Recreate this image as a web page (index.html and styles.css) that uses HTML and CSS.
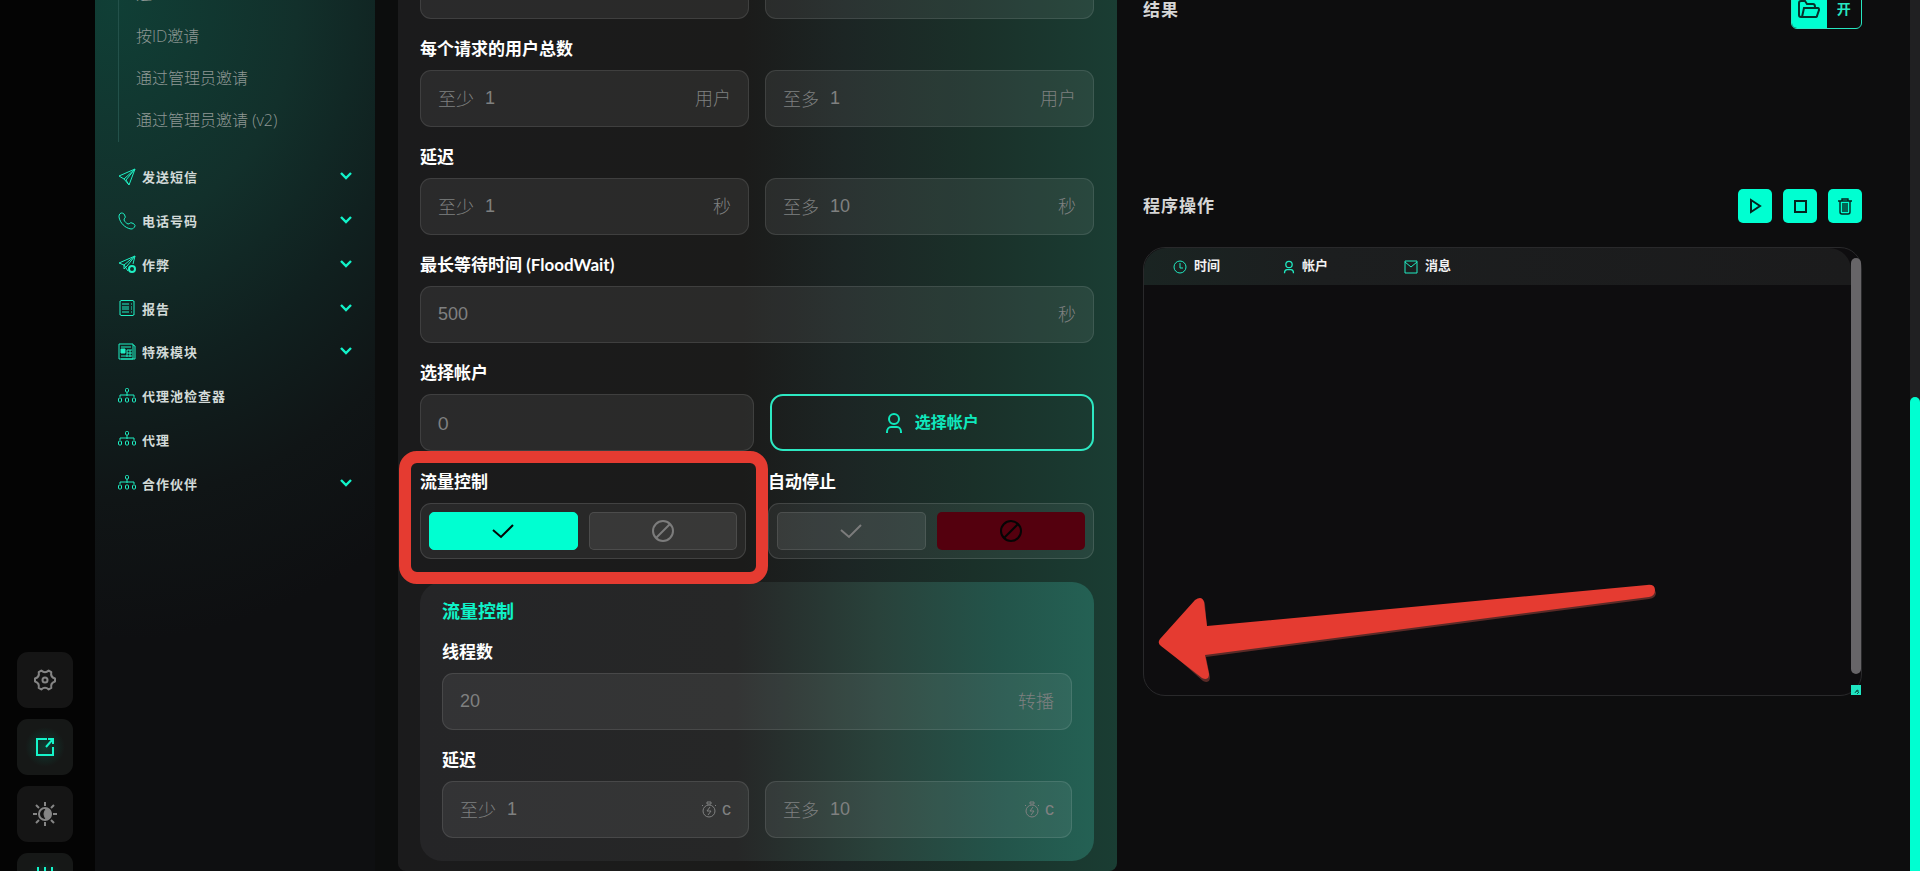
FILE: index.html
```html
<!DOCTYPE html>
<html lang="zh-CN">
<head>
  <meta charset="UTF-8" />
  <meta name="viewport" content="width=device-width, initial-scale=1.0"/>
  <title>按ID邀请</title>
  <link rel="stylesheet" href="styles.css">
</head>
<body>
  <svg class="sprite" aria-hidden="true">
    <symbol id="i-send" viewBox="0 0 18 18"><path d="M17 1 1 8l5 3 5 6 6-16ZM17 1 6 11M17 1l-9 11 3 5"/></symbol>
    <symbol id="i-phone" viewBox="0 0 18 18"><path d="M3 1C1 2 1 4 1 5c1 6 6 11 12 12 2 0 3-1 4-3 0-1 0-1-1-2l-2-1c-2-1-2 1-4 1-2-1-3-2-4-4 0-2 2-2 1-4L6 2C5 1 4 1 3 1Z"/></symbol>
    <symbol id="i-boost" viewBox="0 0 18 18"><path d="M10 16 6 10 1 8l16-7-2 8M17 1 6 10v4l3-3 8-10"/><circle cx="14" cy="14" r="3" stroke-width="2"/></symbol>
    <symbol id="i-report" viewBox="0 0 18 18"><path d="M2 2h1l1-1 1 1 1-1 1 1 1-1 1 1 1-1 1 1 1-1 1 1 1-1 1 1h1v14h-1l-1 1-1-1-1 1-1-1-1 1-1-1-1 1-1-1-1 1-1-1-1 1-1-1H2ZM4 5h7M4 8h7M4 10h7M4 13h7M13 5h1M13 8h1M13 10h1M13 13h1"/></symbol>
    <symbol id="i-module" viewBox="0 0 18 18"><path d="M1 1h14v15H1ZM15 2l2 1v13H3M3 4h10M9 7h5M9 10h5M3 13h11M9 7v7M12 7v7"/><path d="M3 6h4v4H3Z" fill="currentColor"/></symbol>
    <symbol id="i-proxy" viewBox="0 0 18 18"><path d="M9 5v4M2 10V8h14v2"/><rect x="7.5" y="1.5" width="3" height="3.5" rx="1"/><rect x=".5" y="11" width="3" height="4" rx="1"/><rect x="7.5" y="11" width="3" height="4" rx="1"/><rect x="14.5" y="11" width="3" height="4" rx="1"/></symbol>
    <symbol id="i-chevron" viewBox="0 0 12 9"><path d="m1 1 5 5 5-5" stroke-width="2.4"/></symbol>
    <symbol id="i-gear" viewBox="0 0 24 24"><path d="M22 10.5v3Q17.2 15 18.3 19.9L15.7 21.4Q12 18 8.3 21.4L5.7 19.9Q6.8 15 2 13.5v-3Q6.8 9 5.7 4.1L8.3 2.6Q12 6 15.7 2.6l2.6 1.5Q17.2 9 22 10.5Z" stroke-width="2" stroke-linejoin="round"/><circle cx="12" cy="12" r="2.5" stroke-width="2"/></symbol>
    <symbol id="i-open" viewBox="0 0 20 20"><path d="M12 2H2v16h16v-8M11 10l7-8M13 2h5v5" stroke-width="2"/></symbol>
    <symbol id="i-sun" viewBox="0 0 26 26"><path d="M13 1v4M13 21v4M1 13h4M21 13h4M4 4l3 3M19 19l3 3M22 4l-3 3M7 19l-3 3" stroke-width="2"/><circle cx="13" cy="13" r="6" stroke-width="2"/><path d="M14 8q-4 5 0 10 5 0 5-5t-5-5Z" fill="currentColor"/></symbol>
    <symbol id="i-bars" viewBox="0 0 20 28"><path d="M3 0v28M10 0v28M17 0v28" stroke-width="2"/></symbol>
    <symbol id="i-user" viewBox="0 0 18 22"><circle cx="9" cy="7" r="5"/><path d="M2 21v-1c0-3 2-5 4-5h6c2 0 4 2 4 5v1"/></symbol>
    <symbol id="i-check" viewBox="0 0 26 20"><path d="m3 9 8 7L23 4"/></symbol>
    <symbol id="i-ban" viewBox="0 0 24 24"><circle cx="12" cy="12" r="10"/><path d="M5 19 19 5"/></symbol>
    <symbol id="i-timer" viewBox="0 0 16 18"><circle cx="8" cy="10" r="6"/><path d="M6 1h4v2H6ZM2 4 1 5M14 4l1 1M9 6l-3 4h4l-3 4"/></symbol>
    <symbol id="i-folder" viewBox="0 0 22 18"><path d="M4 17H3q-2 0-2-2V3q0-2 2-2h4l2 3h6q2 0 2 3M4 17l2-9h14q1 0 1 2l-2 6q0 1-2 1Z"/></symbol>
    <symbol id="i-play" viewBox="0 0 16 16"><path d="M4 2v12l9-6Z"/></symbol>
    <symbol id="i-stop" viewBox="0 0 16 16"><path d="M3 3h11v11H3Z"/></symbol>
    <symbol id="i-trash" viewBox="0 0 16 18"><path d="M1 4h14M5 4V2h6v2M3 4v11q0 2 2 2h6q2 0 2-2V4M6 6v9M8 6v9M10 6v9" stroke-width="1.4"/></symbol>
    <symbol id="i-clock" viewBox="0 0 14 14"><circle cx="7" cy="7" r="6"/><path d="M7 3v5h3"/></symbol>
    <symbol id="i-mail" viewBox="0 0 14 14"><path d="M1 1h12v12H1ZM1 2l6 5 6-5"/></symbol>
  </svg>

  <div class="app">
    <nav class="rail" aria-label="工具">
      <button aria-label="设置"><svg width="24" height="24"><use href="#i-gear"/></svg></button>
      <button class="on" aria-label="打开"><svg width="20" height="20"><use href="#i-open"/></svg></button>
      <button aria-label="主题"><svg width="26" height="26"><use href="#i-sun"/></svg></button>
      <button class="on" aria-label="统计"><svg width="20" height="28"><use href="#i-bars"/></svg></button>
    </nav>

    <aside class="sidebar">
      <ul class="submenu">
        <li><a href="#">通</a></li>
        <li><a href="#">按ID邀请</a></li>
        <li><a href="#">通过管理员邀请</a></li>
        <li><a href="#">通过管理员邀请 (v2)</a></li>
      </ul>
      <ul class="menu">
        <li><a href="#"><svg class="ico"><use href="#i-send"/></svg>发送短信<svg class="chevron"><use href="#i-chevron"/></svg></a></li>
        <li><a href="#"><svg class="ico"><use href="#i-phone"/></svg>电话号码<svg class="chevron"><use href="#i-chevron"/></svg></a></li>
        <li><a href="#"><svg class="ico"><use href="#i-boost"/></svg>作弊<svg class="chevron"><use href="#i-chevron"/></svg></a></li>
        <li><a href="#"><svg class="ico"><use href="#i-report"/></svg>报告<svg class="chevron"><use href="#i-chevron"/></svg></a></li>
        <li><a href="#"><svg class="ico"><use href="#i-module"/></svg>特殊模块<svg class="chevron"><use href="#i-chevron"/></svg></a></li>
        <li><a href="#"><svg class="ico"><use href="#i-proxy"/></svg>代理池检查器</a></li>
        <li><a href="#"><svg class="ico"><use href="#i-proxy"/></svg>代理</a></li>
        <li><a href="#"><svg class="ico"><use href="#i-proxy"/></svg>合作伙伴<svg class="chevron"><use href="#i-chevron"/></svg></a></li>
      </ul>
    </aside>

    <form class="form">
      <div class="pair">
        <div class="field"><input type="text" aria-label="最小值"></div>
        <div class="field"><input type="text" aria-label="最大值"></div>
      </div>

      <h3 class="title">每个请求的用户总数</h3>
      <div class="pair">
        <div class="field"><label for="usersMin">至少</label><input type="text" id="usersMin" value="1"><span>用户</span></div>
        <div class="field"><label for="usersMax">至多</label><input type="text" id="usersMax" value="1"><span>用户</span></div>
      </div>

      <h3 class="title">延迟</h3>
      <div class="pair">
        <div class="field"><label for="delayMin">至少</label><input type="text" id="delayMin" value="1"><span>秒</span></div>
        <div class="field"><label for="delayMax">至多</label><input type="text" id="delayMax" value="10"><span>秒</span></div>
      </div>

      <label class="title" for="flood">最长等待时间 (FloodWait)</label>
      <div class="field"><input type="text" id="flood" value="500"><span>秒</span></div>

      <label class="title" for="accounts">选择帐户</label>
      <div class="accounts">
        <div class="field"><input class="count" type="text" id="accounts" value="0"></div>
        <button type="button" class="select-btn"><svg width="18" height="22"><use href="#i-user"/></svg><span>选择帐户</span></button>
      </div>

      <div class="switches">
        <div class="marked">
          <h3 class="title">流量控制</h3>
          <div class="toggle">
            <label class="yes"><input type="radio" name="flow" aria-label="开启流量控制" checked><svg width="26" height="20"><use href="#i-check"/></svg></label>
            <label class="no"><input type="radio" name="flow" aria-label="关闭流量控制"><svg width="24" height="24"><use href="#i-ban"/></svg></label>
          </div>
        </div>
        <div>
          <h3 class="title">自动停止</h3>
          <div class="toggle">
            <label class="yes"><input type="radio" name="stop" aria-label="开启自动停止"><svg width="26" height="20"><use href="#i-check"/></svg></label>
            <label class="no"><input type="radio" name="stop" aria-label="关闭自动停止" checked><svg width="24" height="24"><use href="#i-ban"/></svg></label>
          </div>
        </div>
      </div>

      <section class="card">
        <h2>流量控制</h2>
        <label class="title" for="threads">线程数</label>
        <div class="field"><input type="text" id="threads" value="20"><span>转播</span></div>
        <h3 class="title">延迟</h3>
        <div class="pair">
          <div class="field"><label for="threadMin">至少</label><input type="text" id="threadMin" value="1"><span class="timer"><svg width="16" height="18"><use href="#i-timer"/></svg>c</span></div>
          <div class="field"><label for="threadMax">至多</label><input type="text" id="threadMax" value="10"><span class="timer"><svg width="16" height="18"><use href="#i-timer"/></svg>c</span></div>
        </div>
      </section>
    </form>

    <main class="output">
      <div class="bar results">
        <h2>结果</h2>
        <button class="open-btn"><i><svg width="22" height="18"><use href="#i-folder"/></svg></i><b>开</b></button>
      </div>
      <div class="bar">
        <h2>程序操作</h2>
        <div class="actions">
          <button aria-label="开始"><svg width="16" height="16"><use href="#i-play"/></svg></button>
          <button aria-label="停止"><svg width="16" height="16"><use href="#i-stop"/></svg></button>
          <button aria-label="删除"><svg width="16" height="18"><use href="#i-trash"/></svg></button>
        </div>
      </div>
      <div class="log">
        <table>
          <thead>
            <tr>
              <th class="time"><span><svg width="14" height="14"><use href="#i-clock"/></svg>时间</span></th>
              <th class="account"><span><svg width="12" height="14"><use href="#i-user"/></svg>帐户</span></th>
              <th><span><svg width="14" height="14"><use href="#i-mail"/></svg>消息</span></th>
            </tr>
          </thead>
        </table>
        <div class="log-scroll">
          <div class="thumb"></div>
          <svg class="corner" viewBox="0 0 10 10"><path d="M4 8q0-2 3-2M5 6l2-1v2M6 9l2-2"/></svg>
        </div>
      </div>
      <svg class="arrow" viewBox="0 0 500 104" aria-hidden="true">
        <path class="shade" d="M2 63 39 22q7-5 8 2l2 23L490 7q7 0 8 6 0 5-7 6L48 77l4 20q0 7-7 4Z"/>
        <path d="M2 59 37 20q7-5 9 2l3 24L489 5q8-1 8 5 0 6-6 7L47 75l4 19q0 7-7 4L3 66q-4-3-1-7Z"/>
      </svg>
    </main>

    <div class="page-scroll"><div class="thumb"></div></div>
  </div>
</body>
</html>
```
FILE: styles.css
```css
* {
  box-sizing: border-box;
}
body {
  margin: 0;
  background: #0d0d0e;
  color: #fff;
  font-family: "Liberation Sans", "Noto Sans CJK SC", sans-serif;
  overflow: hidden;
}
h2, h3, ul {
  margin: 0;
  padding: 0;
}
ul {
  list-style: none;
}
a {
  color: inherit;
  text-decoration: none;
}
button {
  padding: 0;
  border: none;
  font-family: inherit;
  cursor: pointer;
}
svg {
  fill: none;
  stroke: currentColor;
  flex: none;
}
.sprite {
  display: none;
}
.app {
  display: grid;
  grid-template-columns: 95px 303px minmax(0, 719fr) minmax(0, 793fr) 10px;
  grid-template-rows: 100vh;
}

/* left rail */
.rail {
  padding: 0 22px 0 17px;
  background: #040404;
  display: flex;
  flex-direction: column;
  justify-content: flex-end;
  gap: 11px;
  margin-bottom: -38px;
}
.rail button {
  height: 56px;
  flex: none;
  border-radius: 11px;
  background: #151515;
  color: #858585;
  display: flex;
  align-items: center;
  justify-content: center;
}
.rail .on {
  color: #15f5ca;
  background: radial-gradient(circle, #103b31 0, #161817 50%);
}

/* menu */
.sidebar {
  padding: 0 46px 0 23px;
  background:
    linear-gradient(90deg, transparent 280px, #0c0d0d 280px),
    radial-gradient(520px 640px at 20px 0, #103f36 0, #12302b 35%, #10201f 58%, #101516 78%, #0e0f11 100%);
}
.submenu {
  margin-top: -27px;
  height: 169px;
  border-left: 1px solid #23514a;
  padding-left: 17px;
  font: 300 16px/42px "Open Sans", "Noto Sans CJK SC", sans-serif;
  color: #8e9794;
}
.menu {
  display: grid;
  grid-auto-rows: 1fr;
  height: 350px;
  margin-top: 13px;
  font-size: 13px;
  font-weight: 700;
  letter-spacing: 1px;
  color: #d2dad8;
}
.menu a {
  display: flex;
  align-items: center;
  height: 100%;
}
.ico {
  width: 18px;
  height: 18px;
  margin-right: 6px;
  color: #1ff0c4;
}
.chevron {
  width: 12px;
  height: 9px;
  margin-left: auto;
  color: #12f3c9;
}

/* form */
.form {
  align-self: start;
  margin-top: -38px;
  padding: 0 23px 10px 22px;
  border-radius: 0 0 8px 8px;
  background: linear-gradient(90deg, #1b1b1c 0, #1b1b1a 48%, #1c2524 62%, #1a3029 80%, #1a3d33 100%);
}
.pair, .switches, .accounts {
  display: grid;
  grid-template-columns: repeat(2, minmax(0, 1fr));
  gap: 16px;
}
.switches {
  gap: 22px;
  padding-top: 1px;
}
.accounts {
  grid-template-columns: 333fr 324fr;
}
.title {
  display: block;
  padding: 18px 0 9px;
  font: 700 17px/24px Lato, "Noto Sans CJK SC", sans-serif;
}
.field {
  display: flex;
  align-items: center;
  height: 57px;
  padding: 0 17px;
  border: 1px solid rgba(255, 255, 255, 0.1);
  border-radius: 11px;
  background: rgba(255, 255, 255, 0.065);
  color: #7f8080;
  font-size: 18px;
  font-weight: 300;
}
.field label {
  margin-right: 11px;
  padding-bottom: 2px;
}
.field span {
  padding-bottom: 3px;
}
.field input {
  flex: 1;
  min-width: 0;
  padding: 0;
  border: none;
  background: none;
  color: inherit;
  font: inherit;
}
.field .count {
  font-family: Lato, sans-serif;
  font-weight: 400;
}
.field .timer {
  display: flex;
  align-items: center;
  gap: 5px;
  padding: 0;
}
.select-btn {
  display: flex;
  align-items: center;
  justify-content: center;
  gap: 12px;
  border: 2px solid #2de8c2;
  border-radius: 13px;
  background: none;
  color: #0fe8bd;
  font-size: 16px;
  font-weight: 700;
}
.select-btn span {
  padding-bottom: 3px;
}
.select-btn svg {
  stroke-width: 2;
}
.toggle {
  display: flex;
  gap: 11px;
  height: 56px;
  padding: 8px;
  border: 1px solid rgba(255, 255, 255, 0.12);
  border-radius: 11px;
  background: rgba(255, 255, 255, 0.06);
}
.toggle label {
  flex: 1;
  display: flex;
  align-items: center;
  justify-content: center;
  border: 1px solid rgba(255, 255, 255, 0.1);
  border-radius: 5px;
  background: rgba(255, 255, 255, 0.08);
  color: #7c7c7c;
  cursor: pointer;
}
.toggle input {
  appearance: none;
  width: 0;
  margin: 0;
}
.toggle svg {
  stroke-width: 2;
}
.toggle label:has(:checked) {
  color: #050505;
  border-color: transparent;
}
.toggle .yes:has(:checked) {
  border-color: #00ffd1;
  background: #00ffd1;
}
.toggle .no:has(:checked) {
  background: #54000e;
}
.marked {
  position: relative;
}
.marked::after {
  content: "";
  position: absolute;
  inset: -1px -22px -25px -21px;
  border: 12px solid #e53b31;
  border-radius: 18px;
}
.card {
  margin-top: 23px;
  padding: 20px 22px 23px;
  border-radius: 22px;
  background: linear-gradient(90deg, #252527 0, #262727 47%, #29423b 68%, #23544a 86%, #246154 100%);
}
.card h2 {
  color: #0ff3c8;
  font-size: 18px;
  line-height: 20px;
}

/* results and log */
.output {
  position: relative;
  padding: 0 48px 0 26px;
}
.bar {
  display: flex;
  align-items: center;
  justify-content: space-between;
  height: 34px;
}
.bar h2 {
  padding-bottom: 4px;
  font-size: 17px;
  letter-spacing: 1px;
  color: #d6d6d6;
}
.results {
  height: 38px;
  margin: -9px 0 160px;
}
.open-btn {
  display: flex;
  width: 71px;
  height: 38px;
  border: 1px solid #27e6c0;
  border-radius: 6px;
  background: none;
  color: #27e6c0;
  overflow: hidden;
}
.open-btn i, .open-btn b {
  flex: 1;
  height: 100%;
  display: flex;
  align-items: center;
  justify-content: center;
  padding-bottom: 4px;
  font-size: 14px;
}
.open-btn i {
  padding-bottom: 2px;
  background: #00ffd1;
  color: #06332b;
}
.open-btn svg {
  stroke-width: 2;
}
.actions {
  display: flex;
  gap: 11px;
}
.actions button {
  width: 34px;
  height: 34px;
  border-radius: 5px;
  background: #00ffd1;
  color: #05231e;
  display: flex;
  align-items: center;
  justify-content: center;
}
.actions svg {
  stroke-width: 2;
}
.log {
  display: flex;
  height: 449px;
  margin-top: 24px;
  border: 1px solid #29292b;
  border-radius: 22px;
  background: #0e0d0f;
}
.log table {
  flex: 1;
  align-self: flex-start;
  border-collapse: collapse;
  table-layout: fixed;
  background: linear-gradient(90deg, #1a2422 0, #1c1e1f 25%, #1b1b1c 100%);
  border-radius: 22px 22px 0 0;
}
.log th {
  height: 37px;
  padding: 0 0 4px 29px;
  text-align: left;
  font-size: 13px;
  color: #f1f1f1;
}
.log .time {
  width: 110px;
}
.log .account {
  width: 121px;
}
.log th span {
  display: flex;
  align-items: center;
  gap: 7px;
}
.log th svg {
  margin-top: 4px;
  color: #20eac2;
}
.log .account svg {
  stroke-width: 2;
}
.log-scroll {
  width: 10px;
  display: flex;
  flex-direction: column;
  justify-content: space-between;
  padding-top: 10px;
}
.log-scroll .thumb {
  flex: 1;
  margin-bottom: 11px;
  border-radius: 5px;
  background: #676568;
}
.corner {
  width: 10px;
  height: 10px;
  background: #1fe5c2;
  color: #07594b;
}
.arrow {
  position: absolute;
  left: 41px;
  top: 580px;
  width: 500px;
  height: 104px;
}
.arrow path {
  fill: #e53b31;
  stroke: none;
}
.arrow .shade {
  fill: #5a2a27;
}

/* page scrollbar */
.page-scroll {
  padding-top: 397px;
  background: #202022;
}
.page-scroll .thumb {
  height: 100%;
  border-radius: 5px 5px 0 0;
  background: #00ffd1;
}
```
